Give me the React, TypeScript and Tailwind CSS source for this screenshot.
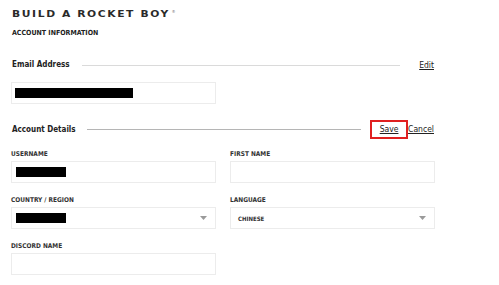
const Caret = () => (
  <svg width="7" height="4" viewBox="0 0 7 4" className="shrink-0">
    <path d="M0 0 L7 0 L3.5 4 Z" fill="#9a9a9a" />
  </svg>
);

const Label = ({ children }: { children: React.ReactNode }) => (
  <div className="h-[8px] text-[6.5px] leading-[8px] font-bold text-[#333] uppercase mb-[3px]">
    {children}
  </div>
);

const Box = ({ children }: { children?: React.ReactNode }) => (
  <div className="h-[22px] w-[205px] border border-[#ececec] flex items-center px-[4px]">{children}</div>
);

const App = () => {
  return (
    <div className="w-[499px] h-[285px] bg-white pl-[11px] pt-[10px] relative overflow-hidden" style={{ fontFamily: '"DejaVu Sans Condensed", "Liberation Sans", sans-serif' }}>
      <div className="flex items-start h-[9px] pl-[1px]">
        <span className="inline-block origin-left scale-x-[1.34] text-[8px] leading-[9px] font-bold tracking-[1.2px] text-[#2a2a2a]" style={{ fontFamily: '"DejaVu Sans", sans-serif' }}>
          BUILD A ROCKET BOY
        </span>
        <span className="text-[4px] leading-[4px] text-[#666] ml-[42px]">®</span>
      </div>

      <div className="mt-[10px] pl-[1px] text-[7px] leading-[8px] font-bold text-[#222]">ACCOUNT INFORMATION</div>

      <div className="mt-[23px] flex items-center h-[10px] w-[423px]">
        <span className="pl-[1px] text-[8px] font-bold text-[#222]">Email Address</span>
        <div className="flex-1 ml-[12px] mr-[19px] h-px bg-[#dadada]" />
        <span className="text-[8.5px] text-[#222] underline">Edit</span>
      </div>

      <div className="mt-[12px]">
        <Box>
          <div className="w-[118px] h-[10px] bg-black -ml-[1px]" />
        </Box>
      </div>

      <div className="mt-[16px] flex items-center h-[19px] w-[423px]">
        <span className="pl-[1px] text-[8px] font-bold text-[#222]">Account Details</span>
        <div className="flex-1 ml-[11px] mr-[9px] h-px bg-[#b5b5b5]" />
        <span className="w-[38px] h-[19px] border-2 border-[#e02020] flex items-center justify-center text-[8.5px] text-[#222] underline">Save</span>
        <span className="text-[8.5px] text-[#222] underline">Cancel</span>
      </div>

      <div className="mt-[11px] grid grid-cols-[219px_205px] gap-y-[13px]">
        <div>
          <Label>Username</Label>
          <Box>
            <div className="w-[50px] h-[10px] bg-black" />
          </Box>
        </div>
        <div>
          <Label>First Name</Label>
          <Box />
        </div>
        <div>
          <Label>Country / Region</Label>
          <Box>
            <div className="w-[50px] h-[10px] bg-black" />
            <div className="flex-1" />
            <div className="mr-[4px]"><Caret /></div>
          </Box>
        </div>
        <div>
          <Label>Language</Label>
          <Box>
            <span className="pl-[3px] text-[6px] text-[#333] font-semibold">CHINESE</span>
            <div className="flex-1" />
            <div className="mr-[4px]"><Caret /></div>
          </Box>
        </div>
        <div>
          <Label>Discord Name</Label>
          <Box />
        </div>
      </div>
    </div>
  );
};

export default App;
